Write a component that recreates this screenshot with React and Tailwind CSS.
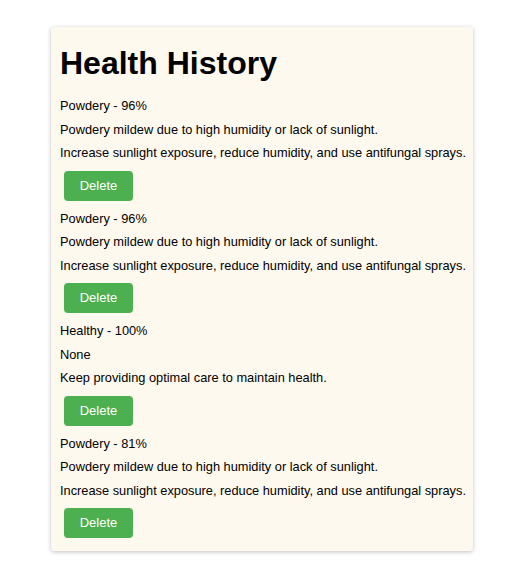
import React from 'react'

const history = [
  {
    label: 'Powdery - 96%',
    cause: 'Powdery mildew due to high humidity or lack of sunlight.',
    remedy: 'Increase sunlight exposure, reduce humidity, and use antifungal sprays.',
  },
  {
    label: 'Powdery - 96%',
    cause: 'Powdery mildew due to high humidity or lack of sunlight.',
    remedy: 'Increase sunlight exposure, reduce humidity, and use antifungal sprays.',
  },
  {
    label: 'Healthy - 100%',
    cause: 'None',
    remedy: 'Keep providing optimal care to maintain health.',
  },
  {
    label: 'Powdery - 81%',
    cause: 'Powdery mildew due to high humidity or lack of sunlight.',
    remedy: 'Increase sunlight exposure, reduce humidity, and use antifungal sprays.',
  },
]

const App = () => {
  return (
    <div className="min-h-[573px] bg-white pt-[27px] font-['Liberation_Sans',Arial,sans-serif] text-black">
      <div className="ml-[51px] w-[422px] rounded-[3px] bg-[#fdf9ef] pl-[9px] pr-[2px] pt-[18px] pb-[7px] shadow-[0_1px_4px_rgba(0,0,0,0.25)]">
        <h1 className="mb-[12px] text-[32px] font-bold leading-[37px]">
          Health History
        </h1>

        {history.map((entry, i) => (
          <div key={i} className="pb-[6px]">
            <p className="whitespace-nowrap text-[12.8px] leading-[23.5px]">{entry.label}</p>
            <p className="whitespace-nowrap text-[12.8px] leading-[23.5px]">{entry.cause}</p>
            <p className="whitespace-nowrap text-[12.8px] leading-[23.5px]">{entry.remedy}</p>
            <button className="ml-[4px] mt-[6px] h-[30px] w-[69px] rounded-[4px] bg-[#4caf50] text-[13px] text-white">
              Delete
            </button>
          </div>
        ))}
      </div>
    </div>
  )
}

export default App
